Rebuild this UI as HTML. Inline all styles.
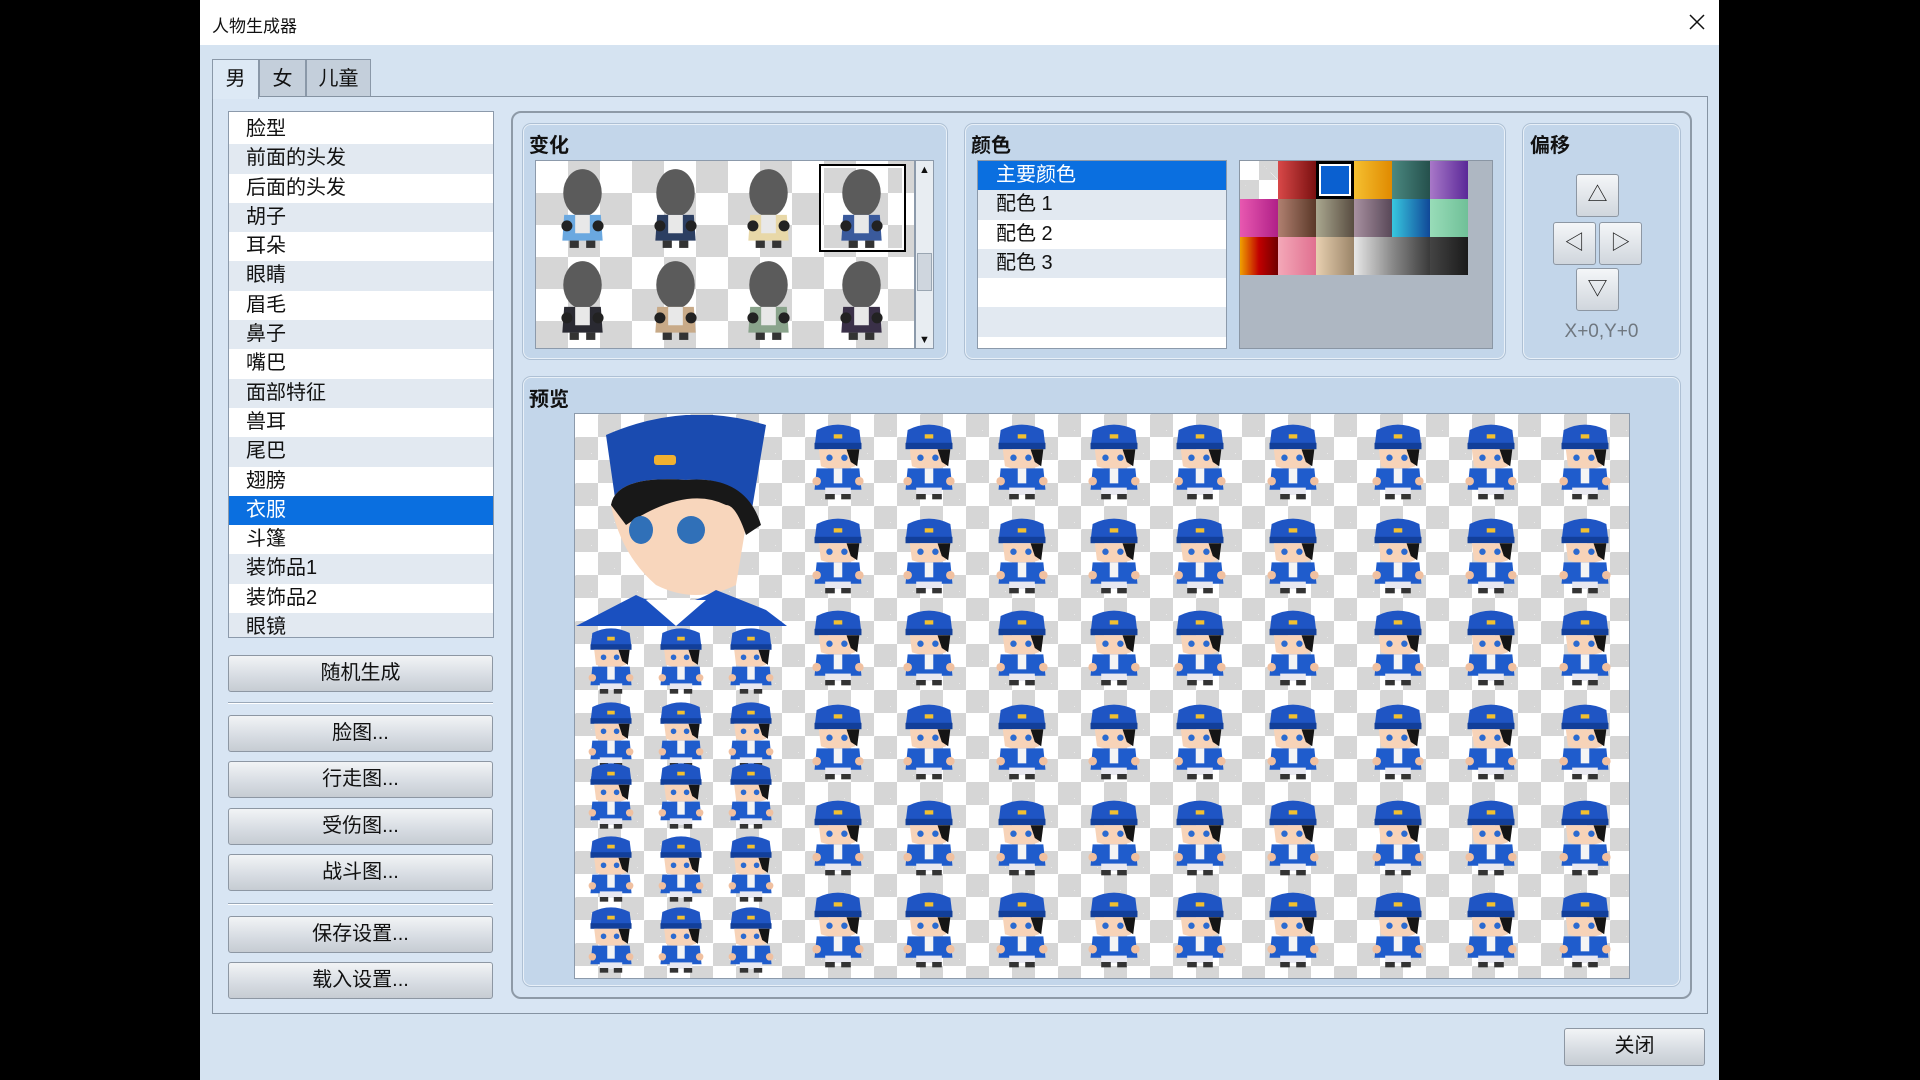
<!DOCTYPE html>
<html><head><meta charset="utf-8"><style>
*{margin:0;padding:0;box-sizing:border-box}
body{width:1920px;height:1080px;background:#000;position:relative;overflow:hidden;font-family:"Liberation Sans","Noto Sans CJK SC",sans-serif;color:#111}
.a{position:absolute}
#win{left:200px;top:0;width:1519px;height:1080px;background:#d5e3f1}
#title{left:200px;top:0;width:1519px;height:45px;background:#fff}
.tab{top:59px;height:38px;border:1px solid #8a98a8;border-bottom:none;font-size:20px;text-align:center;line-height:38px;background:#c4cfdb}
.list{background:#fff;border:1px solid #8c9aab;overflow:hidden}
.row{height:29.3px;font-size:20px;line-height:29px;padding-left:17px}
.row:nth-child(even){background:#e2e9f1}
.btn{left:228px;width:265px;height:37px;border:1px solid #8d97a3;border-radius:3px;background:linear-gradient(#f2f4f6,#d8dde3 55%,#c6ccd3);font-size:20px;text-align:center;line-height:35px}
.panel{background:#c3d6ea;border:1px solid #e8f0f8;border-radius:8px;box-shadow:0 0 0 1px #aec0d4}
.ptitle{font-size:20px;font-weight:bold;}
.chk{background-color:#fff;background-image:linear-gradient(45deg,#d6d6d6 25%,transparent 25%,transparent 75%,#d6d6d6 75%),linear-gradient(45deg,#d6d6d6 25%,transparent 25%,transparent 75%,#d6d6d6 75%)}
.ab{width:43px;height:43px;border:1px solid #8d97a3;border-radius:3px;background:linear-gradient(#f4f6f8,#d0d6dd);font-size:20px;text-align:center;line-height:41px;color:#222}
.pc{position:absolute;width:38px;height:38px}
</style></head><body>
<svg width="0" height="0" style="position:absolute"><defs>
<symbol id="sp" viewBox="0 0 60 72">
<path d="M10 6 Q30 -4 50 6 L52 22 L8 22 Z" fill="#1f55c4"/><rect x="8" y="18" width="44" height="6" fill="#123f9a"/><rect x="26" y="10" width="8" height="4" fill="#f2c030"/>
<path d="M12 24 L48 24 L46 40 Q30 46 14 40 Z" fill="#f7d3b8"/><path d="M38 24 L50 24 L48 40 L42 36 Z" fill="#151515"/>
<circle cx="22" cy="32" r="3" fill="#2b6ad0"/><circle cx="36" cy="32" r="3" fill="#2b6ad0"/>
<path d="M10 42 L50 42 L52 62 L8 62 Z" fill="#1f5ccc"/><rect x="26" y="42" width="8" height="14" fill="#f4f4f4"/><circle cx="10" cy="54" r="4" fill="#f0c0a0"/><circle cx="50" cy="54" r="4" fill="#f0c0a0"/><rect x="18" y="60" width="24" height="7" fill="#e8e8f0"/><rect x="18" y="66" width="9" height="5" fill="#333"/><rect x="33" y="66" width="9" height="5" fill="#333"/>
</symbol>
<symbol id="vh" viewBox="0 0 60 90">
<ellipse cx="30" cy="28" rx="21" ry="26" fill="#5b5b5b"/><path d="M10 52 L50 52 L52 80 L8 80 Z" fill="var(--c)"/><rect x="22" y="52" width="16" height="20" fill="#e8e8e8"/><circle cx="13" cy="64" r="6" fill="#222"/><circle cx="47" cy="64" r="6" fill="#222"/><rect x="16" y="80" width="10" height="8" fill="#333"/><rect x="34" y="80" width="10" height="8" fill="#333"/>
</symbol></defs></svg>
<div id="win" class="a"></div>
<div id="title" class="a"></div>
<div class="a" style="left:212px;top:12px;font-size:17px">人物生成器</div>
<svg class="a" style="left:1689px;top:14px" width="16" height="16"><path d="M1 1L15 15M15 1L1 15" stroke="#111" stroke-width="1.5"/></svg>
<div class="a tab" style="left:212px;width:47px;background:#dde9f5;height:40px;z-index:2">男</div>
<div class="a tab" style="left:259px;width:47px">女</div>
<div class="a tab" style="left:306px;width:65px">儿童</div>
<div class="a" style="left:212px;top:96px;width:1496px;height:918px;border:1px solid #8593a2;background:#d8e5f3"></div>
<div class="a list" style="left:228px;top:111px;width:266px;height:527px;padding-top:3px">
<div class="row">脸型</div><div class="row">前面的头发</div><div class="row">后面的头发</div><div class="row">胡子</div><div class="row">耳朵</div><div class="row">眼睛</div><div class="row">眉毛</div><div class="row">鼻子</div><div class="row">嘴巴</div><div class="row">面部特征</div><div class="row">兽耳</div><div class="row">尾巴</div><div class="row">翅膀</div><div class="row" style="background:#0a6fe0;color:#fff">衣服</div><div class="row">斗篷</div><div class="row">装饰品1</div><div class="row">装饰品2</div><div class="row">眼镜</div></div>
<div class="a btn" style="top:655px">随机生成</div>
<div class="a" style="left:228px;top:702px;width:265px;height:2px;border-top:1px solid #9aa8b8;border-bottom:1px solid #fff"></div>
<div class="a btn" style="top:715px">脸图...</div>
<div class="a btn" style="top:761px">行走图...</div>
<div class="a btn" style="top:808px">受伤图...</div>
<div class="a btn" style="top:854px">战斗图...</div>
<div class="a" style="left:228px;top:903px;width:265px;height:2px;border-top:1px solid #9aa8b8;border-bottom:1px solid #fff"></div>
<div class="a btn" style="top:916px">保存设置...</div>
<div class="a btn" style="top:962px">载入设置...</div>
<div class="a" style="left:511px;top:111px;width:1181px;height:888px;border:2px solid #8e9aa7;border-radius:10px;background:#d5e3f2"></div>
<div class="a panel" style="left:523px;top:124px;width:424px;height:235px"></div>
<div class="a ptitle" style="left:529px;top:129px">变化</div>
<div class="a chk" style="left:535px;top:160px;width:380px;height:189px;border:1px solid #8c9aab;background-size:64px 64px;background-position:0 0,32px 32px"></div>
<div class="a" style="left:915px;top:160px;width:19px;height:189px;background:#e8edf2;border:1px solid #8c9aab"><div style="font-size:11px;text-align:center;margin-top:3px">▲</div><div class="a" style="left:1px;top:92px;width:15px;height:38px;background:#cfd6de;border:1px solid #9aa6b2"></div><div class="a" style="bottom:2px;left:3px;font-size:11px">▼</div></div>
<div class="a" style="left:819px;top:164px;width:87px;height:88px;border:2px solid #000;box-shadow:inset 0 0 0 2px #fff"></div>
<svg class="a" style="left:555px;top:166px;--c:#6aa8e0" width="55" height="85"><use href="#vh"/></svg>
<svg class="a" style="left:648px;top:166px;--c:#2c3f62" width="55" height="85"><use href="#vh"/></svg>
<svg class="a" style="left:741px;top:166px;--c:#e8d8a8" width="55" height="85"><use href="#vh"/></svg>
<svg class="a" style="left:834px;top:166px;--c:#3a5a9c" width="55" height="85"><use href="#vh"/></svg>
<svg class="a" style="left:555px;top:258px;--c:#2a2a32" width="55" height="85"><use href="#vh"/></svg>
<svg class="a" style="left:648px;top:258px;--c:#c8aa88" width="55" height="85"><use href="#vh"/></svg>
<svg class="a" style="left:741px;top:258px;--c:#8aa48c" width="55" height="85"><use href="#vh"/></svg>
<svg class="a" style="left:834px;top:258px;--c:#3a3048" width="55" height="85"><use href="#vh"/></svg>
<div class="a panel" style="left:965px;top:124px;width:540px;height:235px"></div>
<div class="a ptitle" style="left:971px;top:129px">颜色</div>
<div class="a list" style="left:977px;top:160px;width:250px;height:189px">
<div class="row" style="background:#0a6fe0;color:#fff;padding-left:18px">主要颜色</div><div class="row" style="padding-left:18px">配色 1</div><div class="row" style="padding-left:18px">配色 2</div><div class="row" style="padding-left:18px">配色 3</div><div class="row"></div><div class="row"></div></div>
<div class="a" style="left:1239px;top:160px;width:254px;height:189px;background:#aeb7c2;border:1px solid #8a96a4"></div>
<div class="pc chk" style="left:1240px;top:161px;background-size:38px 38px;background-position:0 0,19px 19px"></div>
<div class="pc" style="left:1278px;top:161px;background:linear-gradient(90deg,#d84848,#7a1010)"></div>
<div class="pc" style="left:1316px;top:161px;background:#0a60d0;border:3px solid #000;box-shadow:inset 0 0 0 2px #fff"></div>
<div class="pc" style="left:1354px;top:161px;background:linear-gradient(90deg,#f5c030,#e08a00)"></div>
<div class="pc" style="left:1392px;top:161px;background:linear-gradient(90deg,#4a8880,#25504c)"></div>
<div class="pc" style="left:1430px;top:161px;background:linear-gradient(90deg,#a878c8,#5a2898)"></div>
<div class="pc" style="left:1240px;top:199px;background:linear-gradient(90deg,#e858b0,#b02088)"></div>
<div class="pc" style="left:1278px;top:199px;background:linear-gradient(90deg,#b08070,#5a3828)"></div>
<div class="pc" style="left:1316px;top:199px;background:linear-gradient(90deg,#aaa890,#584c40)"></div>
<div class="pc" style="left:1354px;top:199px;background:linear-gradient(90deg,#a890a0,#584858)"></div>
<div class="pc" style="left:1392px;top:199px;background:linear-gradient(90deg,#38c8e0,#104898)"></div>
<div class="pc" style="left:1430px;top:199px;background:linear-gradient(90deg,#98dcb8,#70c098)"></div>
<div class="pc" style="left:1240px;top:237px;background:linear-gradient(90deg,#f0a000,#c00000 50%,#700000)"></div>
<div class="pc" style="left:1278px;top:237px;background:linear-gradient(90deg,#f4a8b8,#e07090)"></div>
<div class="pc" style="left:1316px;top:237px;background:linear-gradient(90deg,#e8d0b0,#9a8468)"></div>
<div class="pc" style="left:1354px;top:237px;background:linear-gradient(90deg,#e8e8e8,#8a8a8a)"></div>
<div class="pc" style="left:1392px;top:237px;background:linear-gradient(90deg,#8a8a8a,#3a3a3a)"></div>
<div class="pc" style="left:1430px;top:237px;background:linear-gradient(90deg,#444,#1a1a1a)"></div>
<div class="a panel" style="left:1523px;top:124px;width:157px;height:235px"></div>
<div class="a ptitle" style="left:1530px;top:129px">偏移</div>
<div class="a ab" style="left:1576px;top:174px">△</div>
<div class="a ab" style="left:1553px;top:222px">◁</div>
<div class="a ab" style="left:1599px;top:222px">▷</div>
<div class="a ab" style="left:1576px;top:268px">▽</div>
<div class="a" style="left:1523px;top:321px;width:157px;text-align:center;font-size:19px;color:#707880">X+0,Y+0</div>
<div class="a panel" style="left:523px;top:377px;width:1157px;height:609px"></div>
<div class="a ptitle" style="left:529px;top:383px">预览</div>
<div class="a chk" style="left:574px;top:413px;width:1056px;height:566px;border:1px solid #8c9aab;background-size:46px 46px;background-position:0 0,23px 23px"></div>
<svg class="a" style="left:576px;top:415px" width="211" height="211" viewBox="0 0 211 211">
<path d="M30 20 Q110 -15 190 10 L175 100 L40 90 Z" fill="#1a4bb0"/><rect x="78" y="40" width="22" height="10" rx="3" fill="#f0b030"/>
<path d="M35 90 Q40 60 110 65 Q170 60 170 110 L160 170 Q120 190 80 170 Q45 140 35 90Z" fill="#f8d6bc"/>
<path d="M35 90 Q40 60 110 65 Q170 60 185 110 L170 120 Q160 90 150 90 Q110 70 50 110Z" fill="#181818"/>
<ellipse cx="65" cy="115" rx="12" ry="14" fill="#3070b8"/><ellipse cx="115" cy="115" rx="14" ry="14" fill="#3070b8"/>
<path d="M0 211 L60 180 Q100 200 140 175 L190 195 L211 211Z" fill="#1a50c0"/><path d="M70 185 L100 211 L130 185Z" fill="#fff"/>
</svg>
<div id="sprites"></div>
<script>
var h='';var cx=[838,929,1022,1114,1200,1293,1398,1491,1585],cy=[463,557,649,743,839,931];
cx.forEach(function(x){cy.forEach(function(y){h+='<svg class="a" style="left:'+(x-32)+'px;top:'+(y-40)+'px" width="64" height="78"><use href="#sp"/></svg>';});});
[611,681,751].forEach(function(x){[661,735,796,869,940].forEach(function(y){h+='<svg class="a" style="left:'+(x-28)+'px;top:'+(y-34)+'px" width="56" height="68"><use href="#sp"/></svg>';});});
document.getElementById('sprites').innerHTML=h;
</script>
<div class="a btn" style="left:1564px;top:1028px;width:141px;height:38px">关闭</div>
</body></html>
